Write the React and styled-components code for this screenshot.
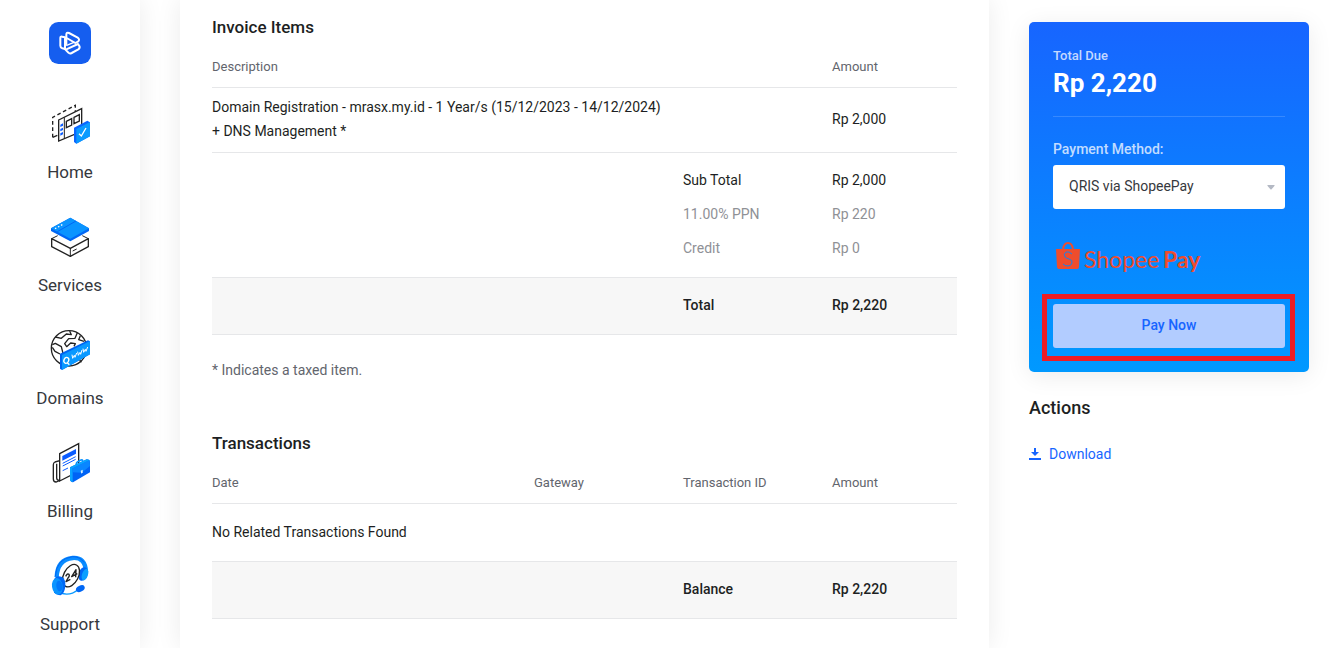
import React from 'react'
import styled, { createGlobalStyle, css } from 'styled-components'

const totals = [
  { label: 'Sub Total', value: 'Rp 2,000' },
  { label: '11.00% PPN', value: 'Rp 220', muted: true },
  { label: 'Credit', value: 'Rp 0', muted: true },
]

const navItems = [
  { label: 'Home', Icon: HomeIcon },
  { label: 'Services', Icon: ServicesIcon },
  { label: 'Domains', Icon: DomainsIcon },
  { label: 'Billing', Icon: BillingIcon },
  { label: 'Support', Icon: SupportIcon },
]

function App() {
  return (
    <>
      <GlobalStyle />
      <Layout>
        <Sidebar />
        <Invoice />
        <Aside>
          <PaymentCard />
          <ActionsTitle>Actions</ActionsTitle>
          <DownloadLink href="#download">
            <DownloadIcon />
            Download
          </DownloadLink>
        </Aside>
      </Layout>
    </>
  )
}

export default App

function Sidebar() {
  return (
    <Side>
      <LogoLink href="#" aria-label="Client area">
        <Logo />
      </LogoLink>
      <Nav>
        {navItems.map(({ label, Icon }) => (
          <NavLink href={`#${label.toLowerCase()}`} key={label}>
            <Icon />
            {label}
          </NavLink>
        ))}
      </Nav>
    </Side>
  )
}

function Invoice() {
  return (
    <Main>
      <Title>Invoice Items</Title>
      <Table>
        <Columns />
        <thead>
          <tr>
            <HeadCell colSpan={3}>Description</HeadCell>
            <HeadCell>Amount</HeadCell>
          </tr>
        </thead>
        <tbody>
          <tr>
            <ItemCell colSpan={3}>
              Domain Registration - mrasx.my.id - 1 Year/s (15/12/2023 - 14/12/2024)
              <br />
              + DNS Management *
            </ItemCell>
            <ItemCell>Rp 2,000</ItemCell>
          </tr>
        </tbody>
        <Totals>
          {totals.map(({ label, value, muted }) => (
            <tr key={label}>
              <TotalCell colSpan={2} />
              <TotalCell $muted={muted}>{label}</TotalCell>
              <TotalCell $muted={muted}>{value}</TotalCell>
            </tr>
          ))}
        </Totals>
        <tfoot>
          <tr>
            <SumCell colSpan={2} />
            <SumCell>Total</SumCell>
            <SumCell>Rp 2,220</SumCell>
          </tr>
        </tfoot>
      </Table>
      <Note>* Indicates a taxed item.</Note>

      <Title>Transactions</Title>
      <Table>
        <Columns />
        <thead>
          <tr>
            <HeadCell>Date</HeadCell>
            <HeadCell>Gateway</HeadCell>
            <HeadCell>Transaction ID</HeadCell>
            <HeadCell>Amount</HeadCell>
          </tr>
        </thead>
        <tbody>
          <tr>
            <EmptyCell colSpan={4}>No Related Transactions Found</EmptyCell>
          </tr>
        </tbody>
        <tfoot>
          <tr>
            <SumCell colSpan={2} />
            <SumCell>Balance</SumCell>
            <SumCell>Rp 2,220</SumCell>
          </tr>
        </tfoot>
      </Table>
    </Main>
  )
}

function Columns() {
  return (
    <colgroup>
      <WideCol />
      <Col />
      <Col />
      <Col />
    </colgroup>
  )
}

function PaymentCard() {
  return (
    <Card>
      <DueLabel>Total Due</DueLabel>
      <DueAmount>Rp 2,220</DueAmount>
      <MethodLabel htmlFor="method">Payment Method:</MethodLabel>
      <SelectWrap>
        <Select id="method" defaultValue="qris">
          <option value="qris">QRIS via ShopeePay</option>
        </Select>
        <Caret viewBox="0 0 8 5">
          <path d="M1 0h6q1.200 0 .4 1L4.600 4.200q-.6.600-1.200 0L.6 1Q-.2 0 1 0z" fill="#b4b9c4" />
        </Caret>
      </SelectWrap>
      <ShopeePay />
      <PayWrap>
        <PayButton type="button">Pay Now</PayButton>
        <Highlight />
      </PayWrap>
    </Card>
  )
}

function Logo() {
  return (
    <LogoSvg viewBox="57 36 126 126">
      <rect x="57" y="36" width="126" height="126" rx="28" fill="#155eef" />
      <g fill="none" stroke="#fff" strokeWidth="6" strokeLinejoin="round" strokeLinecap="round">
        <path d="M91 84q0-5 5-4l9 2v35l-8-2q-6-2-6-8z" />
        <path d="M109 102V74q0-8 8-5l26 14q7 5 2 11l-9 5-26-15" />
        <path d="M105 117l10 11q4 4 10 1l20-11q6-4 3-10l-4-6-35 16" />
        <path d="M110 106l22-9" strokeWidth="4" />
      </g>
    </LogoSvg>
  )
}

function HomeIcon() {
  return (
    <NavSvg viewBox="60 282 120 120">
      <path d="M68 382V322l68-36v20" fill="none" stroke="#222" strokeWidth="4" strokeDasharray="11 8" />
      <path d="M68 382l14-6" stroke="#222" strokeWidth="4" />
      <path d="M86 330l69-34v68l-69 29z" fill="#fff" stroke="#222" strokeWidth="4" />
      <path d="M103 322v64" stroke="#222" strokeWidth="3" />
      <path d="M109 334l16-8v19l-16 8zM132 322l16-8v19l-16 8z" fill="none" stroke="#222" strokeWidth="4" />
      <path d="M91 344l8-4v7l-8 4zM91 357l8-4v7l-8 4zM91 370l8-4v7l-8 4z" fill="#0b5cff" />
      <path d="M132 353l40-21 8 5v42l-41 22-7-5z" fill="#0b66ff" />
      <path d="M139 357l41-21v43l-41 22z" fill="#0a9bff" />
      <path d="M147 371l7 7 14-24" fill="none" stroke="#fff" strokeWidth="4" />
    </NavSvg>
  )
}

function ServicesIcon() {
  return (
    <NavSvg viewBox="60 36 120 120">
      <path d="M65 101l56 29 54-29v24l-54 29-56-29z" fill="#fff" stroke="#222" strokeWidth="4" strokeLinejoin="round" />
      <path d="M65 101l18-9M175 101l-18-9M121 130v24M128 138l12-6" stroke="#222" strokeWidth="3" />
      <path d="M63 70l58-32 56 32v8l-56 31-58-31z" fill="#0067f5" />
      <path d="M63 70l58-32 56 32-56 31z" fill="#0a94ff" />
      <path d="M82 80l56-32" stroke="#0067f5" strokeWidth="3" />
      <path d="M75 71l4-2M84 66l4-2M93 61l4-2" stroke="#fff" strokeWidth="4" />
    </NavSvg>
  )
}

function DomainsIcon() {
  return (
    <NavSvg viewBox="60 30 120 120">
      <circle cx="117" cy="85" r="53" fill="#fff" stroke="#222" strokeWidth="4" />
      <g fill="none" stroke="#222" strokeWidth="4" strokeLinejoin="round">
        <path d="M76 51l18 4 15-13 15 2-5-11M67 74l9-4 18 10 5 20M67 82l8 12 15 8" />
        <path d="M142 38l-7 17-19 1-12 15 6 9 12-11 14 2-4 8M151 47l-5 12 16 5M111 126l3 11M149 120l5 7" />
      </g>
      <path d="M90 101l84-40 6 3v39l-84 47-6-4z" fill="#0065f2" />
      <path d="M96 105l84-42v40l-84 47z" fill="#0a99ff" />
      <ellipse cx="109" cy="121" rx="7" ry="9" fill="none" stroke="#fff" strokeWidth="4" transform="rotate(24 109 121)" />
      <path d="M112 128l6 6" stroke="#fff" strokeWidth="4" />
      <path
        d="M126 104l2 11 5-9 2 6 5-13M143 95l2 11 5-9 2 6 4-13M159 86l2 11 5-9 2 6 5-13"
        fill="none"
        stroke="#fff"
        strokeWidth="3"
      />
    </NavSvg>
  )
}

function BillingIcon() {
  return (
    <NavSvg viewBox="60 39 120 120">
      <path d="M89 92l-14 4q-5 2-5 8v43q0 9 8 9l12-5z" fill="#fff" stroke="#222" strokeWidth="4" />
      <path d="M80 101v43q0 7 8 7" fill="none" stroke="#222" strokeWidth="4" />
      <path d="M89 71l57-30v83l-57 29z" fill="#fff" stroke="#222" strokeWidth="4" />
      <path d="M97 78l41-21v14l-41 21z" fill="#0b5cff" />
      <path d="M98 100l39-20M98 108l39-20M98 122l16-8" stroke="#0b5cff" strokeWidth="3" />
      <path d="M139 108v-7q0-4 4-6l10-5q5-2 5 4v8" fill="none" stroke="#0a94ff" strokeWidth="5" />
      <path d="M120 112l50-24q10 0 10 9v30l-51 30q-9-1-9-9z" fill="#0063f5" />
      <path d="M120 112l8 3v42l-5-3q-3-2-3-7z" fill="#0aa4ff" />
      <path d="M128 115l51-25 1 18-25 20-27-1z" fill="#0a86ff" />
      <path d="M152 122l6-3v8l-4 4z" fill="#d9efff" />
      <path d="M120 112l50-24 9 2-51 25z" fill="#0aa4ff" />
    </NavSvg>
  )
}

function SupportIcon() {
  return (
    <NavSvg viewBox="60 33 120 120">
      <path d="M80 96Q82 44 128 39q38-3 40 42" fill="none" stroke="#0a8cff" strokeWidth="13" />
      <path d="M76 94Q80 40 128 35q22 0 34 17" fill="none" stroke="#0067f5" strokeWidth="3" />
      <ellipse cx="159" cy="87" rx="13" ry="21" fill="#0067f5" transform="rotate(18 159 87)" />
      <ellipse cx="165" cy="89" rx="9" ry="18" fill="#0aa0ff" transform="rotate(18 165 89)" />
      <ellipse cx="123" cy="92" rx="22" ry="36" fill="#fff" stroke="#222" strokeWidth="4" transform="rotate(27 123 92)" />
      <g fill="none" stroke="#222" strokeWidth="4" strokeLinejoin="round">
        <path d="M107 94q5-10 10-6 3 4-3 11l-6 11 13-7" />
        <path d="M137 97l1-23-13 21 17-9" />
      </g>
      <path d="M92 144q28 10 52-10" fill="none" stroke="#0a9bff" strokeWidth="4" />
      <ellipse cx="151" cy="131" rx="14" ry="9" fill="#0067f5" transform="rotate(-28 151 131)" />
      <path d="M74 99q8-9 22-3 11 6 10 26-1 20-14 29-14-1-20-9z" fill="#0067f5" />
      <ellipse cx="82" cy="124" rx="16" ry="25" fill="#0a94ff" transform="rotate(-8 82 124)" />
      <ellipse cx="88" cy="123" rx="9" ry="16" fill="#0078fa" transform="rotate(-8 88 123)" />
    </NavSvg>
  )
}

function ShopeePay() {
  return (
    <ShopeeSvg viewBox="0 0 232 36" role="img" aria-label="ShopeePay">
      <g fill="none" stroke="#ee4d2d">
        <path d="M10 8Q11 2 15 2t5 6" strokeWidth="2" />
        <path d="M3 8h24l-1 18q0 2-2 2H6q-2 0-2-2z" fill="#ee4d2d" stroke="none" />
        <path d="M19 13q-3-3-6-2-3 2-1 5 1 1 4 2 4 1 3 4-1 3-4 3-3 0-5-2" stroke="#1482f0" strokeWidth="1" />
      </g>
      <ShopeeText x="31" y="27">Shopee</ShopeeText>
      <ShopeeText x="110" y="27" $bold>Pay</ShopeeText>
    </ShopeeSvg>
  )
}

function DownloadIcon() {
  return (
    <DownloadSvg viewBox="0 0 12 12">
      <path d="M5 0h2v4h3L6 8 2 4h3zM0 10h12v2H0z" fill="#1765ff" />
    </DownloadSvg>
  )
}

const GlobalStyle = createGlobalStyle`
  * {
    box-sizing: border-box;
  }
  body {
    margin: 0;
    background: #fff;
    color: #1d1f23;
    font-family: Roboto, "Liberation Sans", sans-serif;
    font-size: 14px;
    line-height: 24px;
  }
`

const Layout = styled.div`
  display: grid;
  grid-template-columns: 140px minmax(0, 1fr) 280px;
  gap: 40px;
  min-height: 100vh;
  padding-right: 32px;
`

const Side = styled.aside`
  display: flex;
  flex-direction: column;
  align-items: center;
  padding-top: 22px;
  box-shadow: 0 0 24px rgba(0, 0, 0, 0.08);
`

const LogoLink = styled.a`
  display: block;
  height: 42px;
  margin-bottom: 40px;
`

const LogoSvg = styled.svg`
  width: 42px;
  height: 42px;
`

const Nav = styled.nav`
  display: flex;
  flex-direction: column;
  gap: 33px;
`

const NavLink = styled.a`
  display: flex;
  flex-direction: column;
  align-items: center;
  gap: 16px;
  color: #36383d;
  font-size: 17px;
  text-decoration: none;
`

const NavSvg = styled.svg`
  width: 40px;
  height: 40px;
  overflow: visible;
`

const Main = styled.main`
  padding: 15px 32px 24px;
  background: #fff;
  box-shadow: 0 0 24px rgba(0, 0, 0, 0.08);
`

const Title = styled.h2`
  margin: 0;
  font-size: 17px;
  font-weight: 500;
  line-height: 24px;
`

const Table = styled.table`
  width: 100%;
  table-layout: fixed;
  border-collapse: separate;
  border-spacing: 0;
`

const Col = styled.col`
  width: 20%;
`

const WideCol = styled.col`
  width: 40%;
`

const cell = css`
  text-align: left;
  padding: 0 0 2px 24px;

  &:first-child {
    padding-left: 0;
  }
`

const HeadCell = styled.th`
  ${cell}
  height: 49px;
  padding-top: 10px;
  border-bottom: 1px solid #e6e7e9;
  color: #62656d;
  font-size: 13px;
  font-weight: 400;
`

const ItemCell = styled.td`
  ${cell}
  height: 65px;
  border-bottom: 1px solid #e6e7e9;
`

const Totals = styled.tbody`
  &::before,
  &::after {
    content: '';
    display: table-row;
    height: 11px;
  }
`

const TotalCell = styled.td`
  ${cell}
  height: 34px;
  color: ${props => (props.$muted ? '#8f9196' : 'inherit')};
`

const SumCell = styled.td`
  ${cell}
  height: 58px;
  border-top: 1px solid #e6e7e9;
  border-bottom: 1px solid #e6e7e9;
  background: #f7f7f7;
  font-weight: 500;
`

const EmptyCell = styled.td`
  ${cell}
  height: 57px;
`

const Note = styled.p`
  margin: 23px 0 49px;
  color: #62656d;
`

const Aside = styled.aside`
  padding-top: 22px;
`

const Card = styled.section`
  padding: 24px;
  border-radius: 5px;
  background: linear-gradient(#1765ff, #0099ff);
  box-shadow: 0 4px 24px rgba(0, 0, 0, 0.08);
`

const DueLabel = styled.div`
  color: rgba(255, 255, 255, 0.75);
  font-size: 13px;
  font-weight: 500;
  line-height: 20px;
`

const DueAmount = styled.div`
  padding-bottom: 16px;
  border-bottom: 1px solid rgba(255, 255, 255, 0.16);
  color: #fff;
  font-size: 26px;
  font-weight: 700;
  line-height: 34px;
`

const MethodLabel = styled.label`
  display: block;
  margin: 20px 0 4px;
  color: rgba(255, 255, 255, 0.75);
  font-weight: 500;
`

const SelectWrap = styled.div`
  position: relative;
`

const Select = styled.select`
  display: block;
  width: 100%;
  height: 44px;
  padding: 0 32px 2px 16px;
  border: 0;
  border-radius: 3px;
  appearance: none;
  background: #fff;
  color: #36383d;
  font: inherit;
`

const Caret = styled.svg`
  position: absolute;
  top: 20px;
  right: 10px;
  width: 8px;
  height: 5px;
  pointer-events: none;
`

const ShopeeSvg = styled.svg`
  display: block;
  width: 100%;
  height: 36px;
  margin: 32px 0 27px;
`

const ShopeeText = styled.text`
  fill: #ee4d2d;
  font-family: Lato, sans-serif;
  font-size: 23px;
  font-weight: ${props => (props.$bold ? 700 : 400)};
`

const PayWrap = styled.div`
  position: relative;
`

const PayButton = styled.button`
  display: block;
  width: 100%;
  height: 44px;
  padding: 0 0 2px;
  border: 0;
  border-radius: 3px;
  background: #b2ccff;
  color: #1765ff;
  font: inherit;
  font-weight: 500;
  cursor: pointer;
`

const Highlight = styled.div`
  position: absolute;
  inset: -10px -10px -13px -11px;
  border: 5px solid #ed1c24;
  pointer-events: none;
`

const ActionsTitle = styled.h3`
  margin: 24px 0 22px;
  font-size: 18px;
  font-weight: 500;
  line-height: 24px;
`

const DownloadLink = styled.a`
  display: inline-flex;
  align-items: center;
  gap: 8px;
  color: #1765ff;
  text-decoration: none;
`

const DownloadSvg = styled.svg`
  width: 12px;
  height: 12px;
`
